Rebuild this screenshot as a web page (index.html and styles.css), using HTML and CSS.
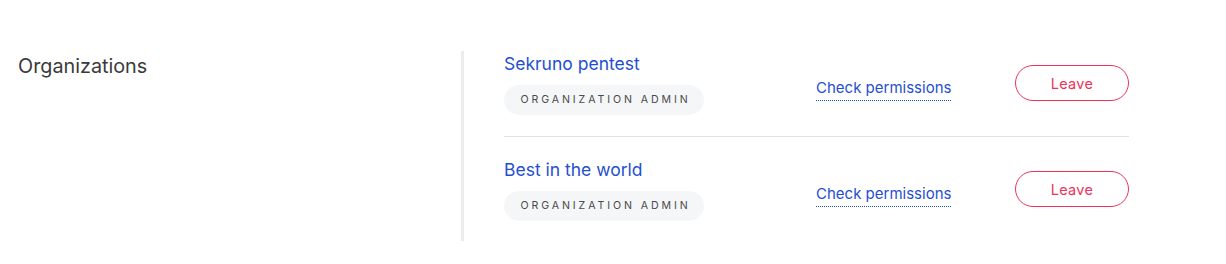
FILE: index.html
```html
<!DOCTYPE html>
<html>
<head>
<meta charset="utf-8">
<link rel="stylesheet" href="styles.css">
</head>
<body>
<section class="settings">
  <div class="label">Organizations</div>
  <ul class="orgs">
    <li class="org">
      <div class="info">
        <a class="name" href="#">Sekruno pentest</a>
        <span class="badge">Organization admin</span>
      </div>
      <div class="perm"><a href="#">Check permissions</a></div>
      <button class="leave">Leave</button>
    </li>
    <li class="org">
      <div class="info">
        <a class="name" href="#">Best in the world</a>
        <span class="badge">Organization admin</span>
      </div>
      <div class="perm"><a href="#">Check permissions</a></div>
      <button class="leave">Leave</button>
    </li>
  </ul>
</section>
</body>
</html>
```
FILE: styles.css
```css
* { box-sizing: border-box; }
html, body { margin: 0; padding: 0; background: #fff; }
body { font-family: Inter, "Noto Sans", sans-serif; color: #333; }
.settings {
  display: flex;
  padding-top: 51px;
}
.label {
  width: 461px;
  padding-left: 18px;
  font-size: 19.8px;
  line-height: 30px;
  color: #3a3a3a;
}
.orgs {
  list-style: none;
  margin: 0;
  padding: 0 0 0 40px;
  border-left: 3px solid #ececec;
  width: 668px;
}
.org {
  display: grid;
  grid-template-columns: 312px 199px 114px;
  align-items: center;
  padding: 20px 0 21px;
}
.org:first-child { padding-top: 0; }
.org:last-child { padding-bottom: 20px; }
.org + .org { border-top: 1px solid #e2e2e2; }
.info { display: flex; flex-direction: column; align-items: flex-start; }
.name {
  font-size: 17.5px;
  line-height: 26px;
  color: #1f4fd1;
  text-decoration: none;
  margin-bottom: 8px;
}
.badge {
  display: inline-block;
  width: 200px;
  height: 30px;
  line-height: 30px;
  text-align: center;
  border-radius: 15px;
  background: #f5f6f8;
  font-size: 10.6px;
  letter-spacing: 2.9px;
  text-transform: uppercase;
  color: #4a4a4a;
  padding-left: 3px;
}
.perm { padding-top: 7px; }
.perm a {
  font-size: 15px;
  color: #1f4fd1;
  text-decoration: none;
  border-bottom: 1px dotted #1f4fd1;
  padding-bottom: 3px;
}
.leave {
  width: 114px;
  height: 36px;
  border: 1px solid #ef3158;
  border-radius: 18px;
  background: #fff;
  color: #ef3158;
  font-family: Inter, sans-serif;
  font-size: 14.5px;
  letter-spacing: 0.3px;
  cursor: pointer;
}
```
